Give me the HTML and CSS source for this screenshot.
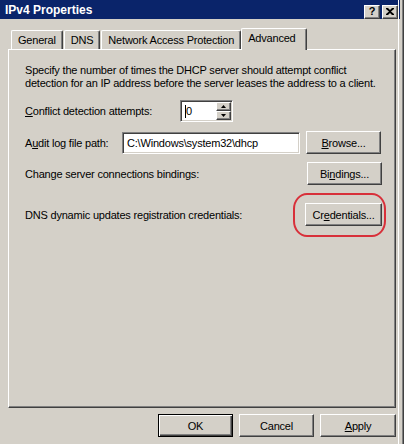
FILE: index.html
```html
<!DOCTYPE html>
<html>
<head>
<meta charset="utf-8">
<link rel="stylesheet" href="styles.css">
</head>
<body>
<div class="window">
  <div class="titlebar">
    <span class="title">IPv4 Properties</span>
    <div class="caption-buttons">
      <div class="cbtn help">?</div>
      <div class="cbtn close">
        <svg width="8" height="7" viewBox="0 0 8 7"><path d="M0 0h2l2 2 2-2h2v1L5 3.5 8 6v1H6L4 5 2 7H0V6l3-2.5L0 1z" fill="#000"/></svg>
      </div>
    </div>
  </div>
  <div class="content">
    <div class="tabs">
      <div class="tab">General</div>
      <div class="tab">DNS</div>
      <div class="tab">Network Access Protection</div>
      <div class="tab active">Advanced</div>
    </div>
    <div class="panel">
      <p class="desc">Specify the number of times the DHCP server should attempt conflict<br>detection for an IP address before the server leases the address to a client.</p>
      <div class="row r1">
        <span class="label label-conflict"><u>C</u>onflict detection attempts:</span>
        <div class="spin">
          <div class="field spin-field"><span class="caret"></span>0</div>
          <div class="spin-btns">
            <div class="sbtn"><svg width="5" height="3" viewBox="0 0 5 3"><path d="M2.5 0L5 3H0z" fill="#000"/></svg></div>
            <div class="sbtn"><svg width="5" height="3" viewBox="0 0 5 3"><path d="M0 0h5L2.5 3z" fill="#000"/></svg></div>
          </div>
        </div>
      </div>
      <div class="row r2">
        <span class="label label-audit">A<u>u</u>dit log file path:</span>
        <div class="field path-field">C:\Windows\system32\dhcp</div>
        <div class="btn"><u>B</u>rowse...</div>
      </div>
      <div class="row r3">
        <span class="label">Change server connections bindings:</span>
        <div class="btn">Bi<u>n</u>dings...</div>
      </div>
      <div class="row r4">
        <span class="label">DNS dynamic updates registration credentials:</span>
        <div class="btn-wrap">
          <div class="btn btn-cred">Cr<u>e</u>dentials...</div>
          <div class="highlight"></div>
        </div>
      </div>
    </div>
    <div class="footer">
      <div class="btn default">OK</div>
      <div class="btn">Cancel</div>
      <div class="btn"><u>A</u>pply</div>
    </div>
  </div>
</div>
</body>
</html>
```
FILE: styles.css
```css
* { box-sizing: border-box; }
html, body { margin: 0; padding: 0; }
body {
  width: 404px;
  height: 444px;
  overflow: hidden;
  background: #d4d0c8;
  font-family: "Liberation Sans", Arial, sans-serif;
  font-size: 11px;
  letter-spacing: -0.2px;
  color: #000;
}
.window {
  width: 404px;
  height: 444px;
  background: #d4d0c8;
  border-right: 1px solid #404040;
  position: relative;
}
.window::after {
  content: "";
  position: absolute;
  top: 0; bottom: 0; right: 0;
  width: 3px;
  border-right: 1px solid #808080;
  border-left: 1px solid #fff;
  pointer-events: none;
}
.titlebar {
  height: 19px;
  background: #0a246a;
  margin-right: 3px;
  display: flex;
  align-items: center;
  justify-content: space-between;
  padding-left: 5px;
  padding-right: 2px;
}
.title {
  color: #fff;
  font-weight: bold;
  font-size: 12px;
  letter-spacing: 0;
  margin-top: 1px;
}
.caption-buttons {
  display: flex;
  gap: 2px;
  margin-top: 4px;
}
.cbtn {
  width: 16px;
  height: 14px;
  background: #d4d0c8;
  border-top: 1px solid #fff;
  border-left: 1px solid #fff;
  border-right: 1px solid #404040;
  border-bottom: 1px solid #404040;
  box-shadow: inset -1px -1px 0 #808080;
  display: flex;
  align-items: center;
  justify-content: center;
  font-weight: bold;
  font-size: 11px;
  line-height: 1;
}
.content {
  padding: 8px 8px 0 8px;
}
.tabs {
  display: flex;
  align-items: flex-end;
  height: 22px;
  padding-left: 3px;
}
.tab {
  height: 19px;
  padding: 3px 6px 0 6px;
  border-top: 1px solid #fff;
  border-left: 1px solid #fff;
  border-right: 1px solid #404040;
  box-shadow: inset -1px 0 0 #808080;
  border-radius: 2px 2px 0 0;
  margin-right: 1px;
  white-space: nowrap;
}
.tab.active {
  height: 22px;
  padding-top: 3px;
  margin-left: -1px;
  margin-right: 0;
  margin-bottom: -1px;
  background: #d4d0c8;
  position: relative;
  z-index: 1;
  padding-left: 6px;
  padding-right: 10px;
}
.panel {
  width: 388px;
  height: 359px;
  border-top: 1px solid #fff;
  border-left: 1px solid #fff;
  border-right: 1px solid #404040;
  border-bottom: 1px solid #404040;
  box-shadow: inset -1px -1px 0 #808080;
  padding: 14px 13px 0 16px;
}
.desc {
  margin: 0;
  line-height: 13px;
  white-space: nowrap;
}
.row {
  display: flex;
  align-items: center;
  position: relative;
}
.r1 { margin-top: 10px; height: 22px; }
.r2 { margin-top: 9px; height: 23px; }
.r3 { margin-top: 8px; height: 23px; }
.r4 { margin-top: 18px; height: 23px; }
.label { white-space: nowrap; }
.label-conflict { width: 155px; }
.label-audit { width: 97px; }
.field {
  background: #fff;
  border-top: 1px solid #808080;
  border-left: 1px solid #808080;
  border-right: 1px solid #fff;
  border-bottom: 1px solid #fff;
  box-shadow: inset 1px 1px 0 #404040, inset -1px -1px 0 #d4d0c8;
  height: 22px;
  display: flex;
  align-items: center;
  padding-left: 4px;
  white-space: nowrap;
}
.spin { display: flex; height: 22px; position: relative; }
.spin-field { width: 53px; padding-left: 4px; }
.caret {
  display: inline-block;
  width: 1px;
  height: 13px;
  background: #000;
}
.spin-btns {
  position: absolute;
  right: 2px;
  top: 2px;
  bottom: 2px;
  display: flex;
  flex-direction: column;
  width: 15px;
}
.sbtn {
  flex: 1;
  background: #d4d0c8;
  border-top: 1px solid #fff;
  border-left: 1px solid #fff;
  border-right: 1px solid #404040;
  border-bottom: 1px solid #404040;
  box-shadow: inset -1px -1px 0 #808080;
  display: flex;
  align-items: center;
  justify-content: center;
}
.path-field { width: 178px; }
.btn {
  width: 75px;
  height: 23px;
  background: #d4d0c8;
  border-top: 1px solid #fff;
  border-left: 1px solid #fff;
  border-right: 1px solid #404040;
  border-bottom: 1px solid #404040;
  box-shadow: inset -1px -1px 0 #808080;
  display: flex;
  align-items: center;
  justify-content: center;
  white-space: nowrap;
  margin-left: auto;
}
.r2 .btn { margin-left: 6px; }
.btn-wrap { margin-left: auto; position: relative; }
.btn-cred { width: 77px; }
.highlight {
  position: absolute;
  left: -12px;
  right: -4px;
  top: -10px;
  bottom: -11px;
  border: 2px solid #d8303a;
  border-radius: 14px / 16px;
  pointer-events: none;
}
.footer {
  display: flex;
  justify-content: flex-end;
  gap: 6px;
  margin-top: 6px;
  width: 388px;
}
.footer .btn { margin-left: 0; }
.footer .btn:nth-child(3) { width: 76px; }
.btn.default {
  border: 1px solid #000;
  box-shadow: inset 1px 1px 0 #fff, inset -1px -1px 0 #404040, inset -2px -2px 0 #808080;
}
```
